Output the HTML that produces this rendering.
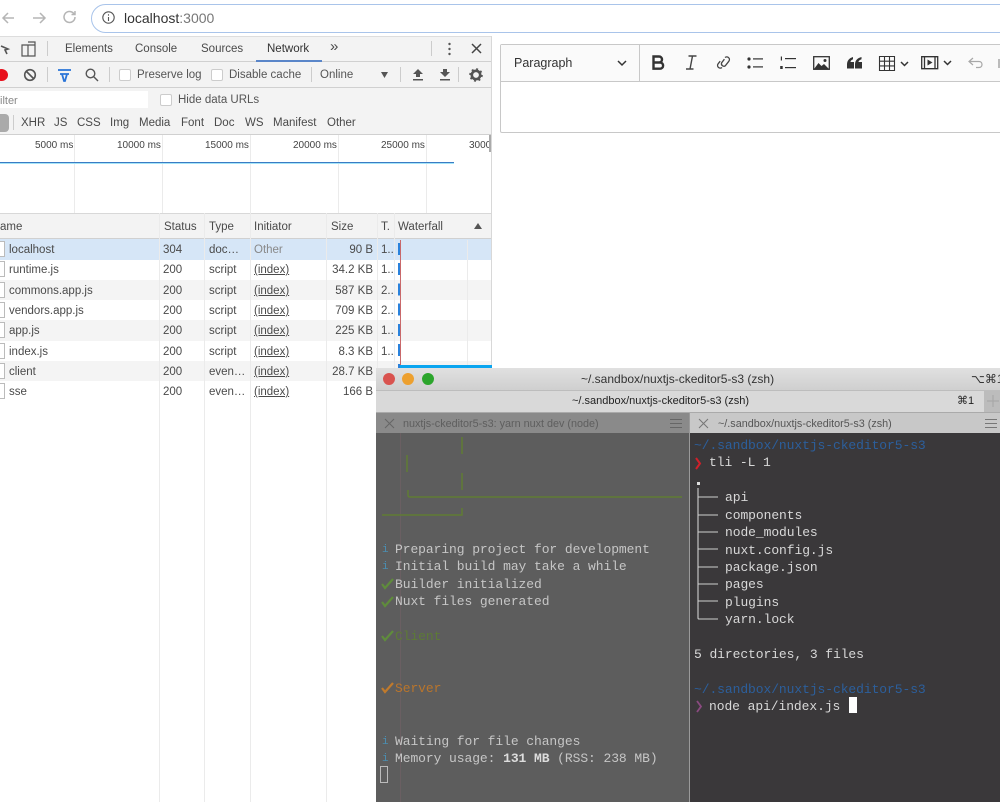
<!DOCTYPE html>
<html><head><meta charset="utf-8"><style>
html,body{margin:0;padding:0;background:#fff}
body{width:1000px;height:802px;position:relative;overflow:hidden;font-family:"Liberation Sans",sans-serif;color:#444}
#w{position:absolute;left:0;top:0;width:1000px;height:802px;overflow:hidden;filter:blur(.3px)}
.a{position:absolute}
.t{position:absolute;white-space:nowrap;line-height:14px;font-size:11.5px;color:#4a4a4a}
.m{position:absolute;white-space:nowrap;font-family:"Liberation Mono",monospace;font-size:13px;letter-spacing:-.08px;line-height:18px;color:#c6c6c6}
.r{color:#d8d8d8}
.cb{position:absolute;width:10px;height:10px;background:#fff;border:1px solid #ccc;border-radius:2px}
.v{position:absolute;width:1px;background:#ebebeb}
.u{text-decoration:underline}
.tt{position:absolute;white-space:nowrap;font-size:10px;line-height:13px;color:#444}
svg{position:absolute;overflow:visible}
</style></head><body><div id="w">

<!-- browser bar -->
<div class="a" style="left:91px;top:4px;width:1000px;height:27px;border:1.5px solid #a9c4ea;border-radius:15px;background:#fff"></div>
<svg style="left:0;top:8px" width="80" height="20" fill="none" stroke="#b5b5b5" stroke-width="1.5"><path d="M14 10H3M8 5l-5 5 5 5"/><path d="M33 10h12M40 5l5 5-5 5"/></svg>
<svg style="left:62px;top:9px" width="16" height="16" fill="none" stroke="#b5b5b5" stroke-width="1.5"><path d="M13 8a5.5 5.5 0 1 1-1.6-3.9L13 5.5M13 2v3.5H9.5"/></svg>
<svg style="left:102px;top:11px" width="14" height="14" fill="none" stroke="#555" stroke-width="1.1"><circle cx="6.500" cy="6.500" r="5.700"/><path d="M6.500 6v4M6.500 3.300v1.300"/></svg>
<div class="t" style="left:124px;top:10px;font-size:14px;line-height:16px;color:#333">localhost<span style="color:#777">:3000</span></div>

<!-- devtools -->
<div class="a" style="left:0;top:36px;width:491px;height:1px;background:#ddd"></div>
<div class="a" style="left:0;top:37px;width:491px;height:98px;background:#f3f3f3"></div>
<div class="a" style="left:491px;top:36px;width:1px;height:330px;background:#d8d8d8"></div>
<div class="a" style="left:0;top:61px;width:491px;height:1px;background:#d0d0d0"></div>
<div class="a" style="left:0;top:87px;width:491px;height:1px;background:#d0d0d0"></div>
<div class="a" style="left:0;top:134px;width:491px;height:1px;background:#d0d0d0"></div>

<svg style="left:0;top:41px" width="36" height="16" fill="none" stroke="#555" stroke-width="1.2"><path d="M0 4v0M1 5l7 3-3 1 2 4" stroke-width="1.600"/><path d="M22 5h13v11H22zM28 2h7v14M28 5v11" transform="translate(0 -1)"/></svg>
<div class="a" style="left:47px;top:41px;width:1px;height:15px;background:#ccc"></div>
<div class="t" style="left:65px;top:42px">Elements</div>
<div class="t" style="left:135px;top:42px">Console</div>
<div class="t" style="left:201px;top:42px">Sources</div>
<div class="t" style="left:267px;top:42px;color:#333">Network</div>
<div class="a" style="left:256px;top:60px;width:66px;height:2px;background:#5a86c9"></div>
<div class="t" style="left:330px;top:40px;font-size:15px">»</div>
<div class="a" style="left:431px;top:41px;width:1px;height:15px;background:#ccc"></div>
<svg style="left:447px;top:42px" width="6" height="14" fill="#555"><circle cx="2.500" cy="2" r="1.200"/><circle cx="2.500" cy="7" r="1.200"/><circle cx="2.500" cy="12" r="1.200"/></svg>
<svg style="left:471px;top:43px" width="12" height="12" stroke="#444" stroke-width="1.500"><path d="M1 1l9 9M10 1l-9 9"/></svg>

<div class="a" style="left:-5px;top:69px;width:13px;height:12px;border-radius:50%;background:#e8101c"></div>
<svg style="left:23px;top:68px" width="14" height="14" fill="none" stroke="#555" stroke-width="1.600"><circle cx="7" cy="7" r="5.300"/><path d="M3 3l8 8"/></svg>
<div class="a" style="left:47px;top:67px;width:1px;height:15px;background:#ccc"></div>
<svg style="left:57px;top:69px" width="16" height="14" fill="none" stroke="#2a74d8" stroke-width="1.800"><path d="M1 1h13M3 5h9M5 5l2 7h1l2-7"/></svg>
<svg style="left:85px;top:68px" width="14" height="14" fill="none" stroke="#555" stroke-width="1.400"><circle cx="5.500" cy="5.500" r="4.300"/><path d="M8.500 8.500l4.500 4.500"/></svg>
<div class="a" style="left:109px;top:67px;width:1px;height:15px;background:#ccc"></div>
<div class="cb" style="left:119px;top:69px"></div>
<div class="t" style="left:137px;top:68px;color:#555">Preserve log</div>
<div class="cb" style="left:211px;top:69px"></div>
<div class="t" style="left:229px;top:68px;color:#555">Disable cache</div>
<div class="a" style="left:311px;top:67px;width:1px;height:15px;background:#ccc"></div>
<div class="t" style="left:320px;top:68px;color:#555">Online</div>
<svg style="left:380px;top:71px" width="9" height="8" fill="#555"><path d="M1 1h7L4.500 7z"/></svg>
<div class="a" style="left:400px;top:67px;width:1px;height:15px;background:#ccc"></div>
<svg style="left:412px;top:69px" width="12" height="13" fill="#555"><path d="M6 0l5 5H8v3H4V5H1zM1 10h10v1.500H1z"/></svg>
<svg style="left:439px;top:69px" width="12" height="13" fill="#555"><path d="M4 0h4v3h3L6 8 1 3h3zM1 10h10v1.500H1z"/></svg>
<div class="a" style="left:458px;top:67px;width:1px;height:15px;background:#ccc"></div>
<svg style="left:469px;top:68px" width="14" height="14"><circle cx="7" cy="7" r="4.200" fill="none" stroke="#555" stroke-width="2.600"/><circle cx="7" cy="7" r="6" fill="none" stroke="#555" stroke-width="1.600" stroke-dasharray="2 2.700"/></svg>

<div class="a" style="left:0;top:91px;width:148px;height:17px;background:#fff"></div>
<div class="t" style="left:0;top:94px;font-size:11px;color:#888">ilter</div>
<div class="cb" style="left:160px;top:94px"></div>
<div class="t" style="left:178px;top:93px;color:#555">Hide data URLs</div>

<div class="a" style="left:-8px;top:114px;width:17px;height:18px;border-radius:4px;background:#aaa"></div>
<div class="a" style="left:13px;top:115px;width:1px;height:15px;background:#ccc"></div>
<div class="t" style="left:21px;top:116px">XHR</div>
<div class="t" style="left:54px;top:116px">JS</div>
<div class="t" style="left:77px;top:116px">CSS</div>
<div class="t" style="left:110px;top:116px">Img</div>
<div class="t" style="left:139px;top:116px">Media</div>
<div class="t" style="left:181px;top:116px">Font</div>
<div class="t" style="left:214px;top:116px">Doc</div>
<div class="t" style="left:245px;top:116px">WS</div>
<div class="t" style="left:273px;top:116px">Manifest</div>
<div class="t" style="left:327px;top:116px">Other</div>

<!-- overview -->
<div class="v" style="left:74px;top:135px;height:78px"></div>
<div class="v" style="left:162px;top:135px;height:78px"></div>
<div class="v" style="left:250px;top:135px;height:78px"></div>
<div class="v" style="left:338px;top:135px;height:78px"></div>
<div class="v" style="left:426px;top:135px;height:78px"></div>
<div class="tt" style="left:35px;top:139px">5000 ms</div>
<div class="tt" style="left:117px;top:139px">10000 ms</div>
<div class="tt" style="left:205px;top:139px">15000 ms</div>
<div class="tt" style="left:293px;top:139px">20000 ms</div>
<div class="tt" style="left:381px;top:139px">25000 ms</div>
<div class="tt" style="left:469px;top:139px;width:20px;overflow:hidden">30000</div>
<div class="a" style="left:489px;top:135px;width:2px;height:17px;background:#aaa"></div>
<div class="a" style="left:0;top:162px;width:454px;height:1px;background:#3a7cc4"></div>
<div class="a" style="left:0;top:163px;width:454px;height:1px;background:#a5e4f8"></div>

<!-- table head -->
<div class="a" style="left:0;top:213px;width:491px;height:26px;background:#f3f3f3;border-top:1px solid #d8d8d8;border-bottom:1px solid #d0d0d0;box-sizing:border-box"></div>
<div class="t" style="left:0;top:220px">ame</div>
<div class="t" style="left:164px;top:220px">Status</div>
<div class="t" style="left:209px;top:220px">Type</div>
<div class="t" style="left:254px;top:220px">Initiator</div>
<div class="t" style="left:331px;top:220px">Size</div>
<div class="t" style="left:381px;top:220px">T.</div>
<div class="t" style="left:398px;top:220px">Waterfall</div>
<svg style="left:473px;top:222px" width="10" height="8" fill="#555"><path d="M5 1l4 6H1z"/></svg>

<!-- rows bg -->
<div class="a" style="left:0;top:239px;width:491px;height:21px;background:#d6e6f7"></div>
<div class="a" style="left:0;top:280px;width:491px;height:20px;background:#f4f4f4"></div>
<div class="a" style="left:0;top:320px;width:491px;height:21px;background:#f4f4f4"></div>
<div class="a" style="left:0;top:361px;width:491px;height:20px;background:#f4f4f4"></div>

<!-- column lines -->
<div class="v" style="left:159px;top:213px;height:589px"></div>
<div class="v" style="left:204px;top:213px;height:589px"></div>
<div class="v" style="left:250px;top:213px;height:589px"></div>
<div class="v" style="left:326px;top:213px;height:589px"></div>
<div class="v" style="left:377px;top:213px;height:589px"></div>
<div class="v" style="left:394px;top:213px;height:589px"></div>
<div class="v" style="left:467px;top:240px;height:128px"></div>

<!-- file icons -->
<div class="a" style="left:-4px;top:241px;width:7px;height:14px;background:#fff;border:1px solid #bbb"></div>
<div class="a" style="left:-4px;top:261px;width:7px;height:14px;background:#fff;border:1px solid #bbb"></div>
<div class="a" style="left:-4px;top:282px;width:7px;height:14px;background:#fff;border:1px solid #bbb"></div>
<div class="a" style="left:-4px;top:302px;width:7px;height:14px;background:#fff;border:1px solid #bbb"></div>
<div class="a" style="left:-4px;top:322px;width:7px;height:14px;background:#fff;border:1px solid #bbb"></div>
<div class="a" style="left:-4px;top:343px;width:7px;height:14px;background:#fff;border:1px solid #bbb"></div>
<div class="a" style="left:-4px;top:363px;width:7px;height:14px;background:#fff;border:1px solid #bbb"></div>
<div class="a" style="left:-4px;top:383px;width:7px;height:14px;background:#fff;border:1px solid #bbb"></div>

<!-- rows -->
<div class="t" style="left:9px;top:243px">localhost</div><div class="t" style="left:163px;top:243px">304</div><div class="t" style="left:209px;top:243px">doc…</div><div class="t" style="left:254px;top:243px;color:#888">Other</div><div class="t" style="left:300px;width:73px;text-align:right;top:243px">90 B</div><div class="t" style="left:381px;top:243px">1..</div>
<div class="t" style="left:9px;top:263px">runtime.js</div><div class="t" style="left:163px;top:263px">200</div><div class="t" style="left:209px;top:263px">script</div><div class="t u" style="left:254px;top:263px">(index)</div><div class="t" style="left:300px;width:73px;text-align:right;top:263px">34.2 KB</div><div class="t" style="left:381px;top:263px">1..</div>
<div class="t" style="left:9px;top:284px">commons.app.js</div><div class="t" style="left:163px;top:284px">200</div><div class="t" style="left:209px;top:284px">script</div><div class="t u" style="left:254px;top:284px">(index)</div><div class="t" style="left:300px;width:73px;text-align:right;top:284px">587 KB</div><div class="t" style="left:381px;top:284px">2..</div>
<div class="t" style="left:9px;top:304px">vendors.app.js</div><div class="t" style="left:163px;top:304px">200</div><div class="t" style="left:209px;top:304px">script</div><div class="t u" style="left:254px;top:304px">(index)</div><div class="t" style="left:300px;width:73px;text-align:right;top:304px">709 KB</div><div class="t" style="left:381px;top:304px">2..</div>
<div class="t" style="left:9px;top:324px">app.js</div><div class="t" style="left:163px;top:324px">200</div><div class="t" style="left:209px;top:324px">script</div><div class="t u" style="left:254px;top:324px">(index)</div><div class="t" style="left:300px;width:73px;text-align:right;top:324px">225 KB</div><div class="t" style="left:381px;top:324px">1..</div>
<div class="t" style="left:9px;top:345px">index.js</div><div class="t" style="left:163px;top:345px">200</div><div class="t" style="left:209px;top:345px">script</div><div class="t u" style="left:254px;top:345px">(index)</div><div class="t" style="left:300px;width:73px;text-align:right;top:345px">8.3 KB</div><div class="t" style="left:381px;top:345px">1..</div>
<div class="t" style="left:9px;top:365px">client</div><div class="t" style="left:163px;top:365px">200</div><div class="t" style="left:209px;top:365px">even…</div><div class="t u" style="left:254px;top:365px">(index)</div><div class="t" style="left:300px;width:73px;text-align:right;top:365px">28.7 KB</div>
<div class="t" style="left:9px;top:385px">sse</div><div class="t" style="left:163px;top:385px">200</div><div class="t" style="left:209px;top:385px">even…</div><div class="t u" style="left:254px;top:385px">(index)</div><div class="t" style="left:300px;width:73px;text-align:right;top:385px">166 B</div>

<!-- waterfall -->
<div class="a" style="left:398px;top:243px;width:2px;height:125px;background:repeating-linear-gradient(#2a82dc 0 12px,transparent 12px 20.200px)"></div>
<div class="a" style="left:400px;top:240px;width:1px;height:128px;background:#c9686a"></div>
<div class="a" style="left:400px;top:365px;width:92px;height:3px;background:#0aa5f0"></div>

<!-- editor -->
<div class="a" style="left:500px;top:44px;width:520px;height:89px;border:1px solid #c8c8c8;border-radius:2px;box-sizing:border-box;background:#fff"></div>
<div class="a" style="left:501px;top:45px;width:520px;height:36px;background:#fafafa;border-bottom:1px solid #c8c8c8"></div>
<div class="a" style="left:639px;top:45px;width:1px;height:36px;background:#c8c8c8"></div>
<div class="t" style="left:514px;top:56px;font-size:12.500px;color:#333">Paragraph</div>
<svg style="left:617px;top:60px" width="10" height="7" fill="none" stroke="#333" stroke-width="1.500"><path d="M1 1l4 4 4-4"/></svg>
<svg style="left:651px;top:55px" width="14" height="16" fill="none" stroke="#333" stroke-width="2.400"><path d="M2.500 1.500h5.500a3 3 0 0 1 0 6h-5.500zM2.500 7.500h6.500a3.100 3.100 0 0 1 0 6.200h-6.500z"/></svg>
<svg style="left:685px;top:55px" width="12" height="15" fill="none" stroke="#444" stroke-width="1.400"><path d="M3.500 1h8M1 14h7.500M7.500 1L5 14"/></svg>
<svg style="left:716px;top:55px" width="15" height="15" fill="none" stroke="#444" stroke-width="1.300"><path d="M9 2.500a2.700 2.700 0 0 1 3.800 3.800l-3.500 4.500a2.500 2.500 0 0 1-3.700-3l2.800-3.600"/><path d="M6 12.500a2.700 2.700 0 0 1-3.800-3.800l2-2.500"/></svg>
<svg style="left:747px;top:57px" width="17" height="13" fill="#333"><circle cx="2" cy="2" r="1.600"/><circle cx="2" cy="10" r="1.600"/><rect x="6" y="1.300" width="10" height="1.200"/><rect x="6" y="9.300" width="10" height="1.200"/></svg>
<svg style="left:779px;top:56px" width="18" height="14" fill="#333"><rect x="1.800" y="0.500" width="1.200" height="4"/><rect x="1.200" y="10" width="2.500" height="3"/><rect x="6" y="2" width="11" height="1.200"/><rect x="6" y="11" width="11" height="1.200"/></svg>
<svg style="left:813px;top:56px" width="17" height="14"><rect x="0.700" y="0.700" width="15.600" height="12.600" fill="none" stroke="#333" stroke-width="1.300"/><path d="M1 13l4.500-6 3 3 2.500-2 5 5z" fill="#333"/><circle cx="12" cy="4.500" r="1.500" fill="#333"/></svg>
<svg style="left:847px;top:57px" width="15" height="12" fill="#333"><path d="M0 7.500C0 3.500 2.500 1 6 0v2.300C4.300 3 3.500 4 3.500 5H7v6.500H0zM8 7.500C8 3.500 10.500 1 14.500 0v2.300C12.500 3 11.500 4 11.500 5H15v6.500H8z"/></svg>
<svg style="left:879px;top:56px" width="31" height="16" fill="none" stroke="#333" stroke-width="1.100"><path d="M.5.500h15v14H.5zM.5 5.200h15M.5 9.900h15M5.500.500v14M10.500.500v14"/><path d="M22 6l3.500 3.500L29 6" stroke-width="1.500"/></svg>
<svg style="left:921px;top:56px" width="32" height="14" fill="none" stroke="#333" stroke-width="1.300"><path d="M.7.700h16v12H.7zM3.500.700v12M14 .700v12"/><path d="M6.500 3.500v6l5-3z" fill="#333" stroke="none"/><path d="M23 5l3.500 3.500L30 5" stroke-width="1.500"/></svg>
<svg style="left:968px;top:57px" width="16" height="12" fill="none" stroke="#a8a8a8" stroke-width="1.200"><path d="M5 1L1 4.500 5 8M1 4.500h10c4 0 4 6 0 6H8"/></svg>
<div class="a" style="left:998px;top:59px;width:2px;height:9px;background:#bbb"></div>

<!-- terminal window -->
<div class="a" style="left:376px;top:368px;width:624px;height:434px;background:#5d5d5d"></div>
<div class="a" style="left:376px;top:368px;width:624px;height:22px;background:linear-gradient(#e0e0e0,#cfcfcf)"></div>
<div class="a" style="left:376px;top:390px;width:624px;height:1px;background:#bdbdbd"></div>
<div class="a" style="left:376px;top:391px;width:608px;height:21px;background:#d9d9d9"></div>
<div class="a" style="left:984px;top:391px;width:16px;height:21px;background:#bcbcbc"></div>
<div class="a" style="left:376px;top:412px;width:624px;height:1px;background:#aaa"></div>
<div class="a" style="left:376px;top:413px;width:314px;height:20px;background:#8a8a8a"></div>
<div class="a" style="left:690px;top:413px;width:310px;height:20px;background:#c8c8c8"></div>
<div class="a" style="left:689px;top:413px;width:1px;height:389px;background:#9a9a9a"></div>
<div class="a" style="left:690px;top:433px;width:310px;height:369px;background:#3a383a"></div>

<div class="a" style="left:383px;top:373px;width:12px;height:12px;border-radius:50%;background:#d9534f"></div>
<div class="a" style="left:402px;top:373px;width:12px;height:12px;border-radius:50%;background:#eda02f"></div>
<div class="a" style="left:422px;top:373px;width:12px;height:12px;border-radius:50%;background:#2ca52c"></div>
<div class="t" style="left:581px;top:372px;font-size:12px;color:#333">~/.sandbox/nuxtjs-ckeditor5-s3 (zsh)</div>
<div class="t" style="left:971px;top:372px;font-size:12px;color:#333">⌥⌘1</div>
<div class="t" style="left:572px;top:394px;font-size:11px;color:#222">~/.sandbox/nuxtjs-ckeditor5-s3 (zsh)</div>
<div class="t" style="left:957px;top:394px;font-size:11px;color:#222">⌘1</div>
<svg style="left:987px;top:395px" width="12" height="12" stroke="#a5a5a5"><path d="M6 0v12M0 6h12"/></svg>

<svg style="left:384px;top:418px" width="11" height="11" stroke="#666"><path d="M1 1l9 9M10 1l-9 9"/></svg>
<div class="t" style="left:403px;top:417px;font-size:10.800px;color:#5e5e5e">nuxtjs-ckeditor5-s3: yarn nuxt dev (node)</div>
<svg style="left:670px;top:419px" width="12" height="9" stroke="#666"><path d="M0 .5h12M0 4.500h12M0 8.500h12"/></svg>
<svg style="left:698px;top:418px" width="11" height="11" stroke="#777"><path d="M1 1l9 9M10 1l-9 9"/></svg>
<div class="t" style="left:718px;top:417px;font-size:10.800px;color:#555">~/.sandbox/nuxtjs-ckeditor5-s3 (zsh)</div>
<svg style="left:985px;top:419px" width="12" height="9" stroke="#777"><path d="M0 .5h12M0 4.500h12M0 8.500h12"/></svg>

<!-- left pane -->
<div class="a" style="left:400px;top:433px;width:1px;height:369px;background:#6a5f62"></div>
<svg style="left:376px;top:433px" width="314" height="90" fill="none" stroke="#607c34" stroke-width="1.500"><path d="M86 4v17M31 22v17M86 40v17M32 57v5q0 2 2 2H306"/><path d="M6 82H86v-7"/></svg>
<div class="m" style="left:395px;top:541px">Preparing project for development</div>
<div class="m" style="left:395px;top:558px">Initial build may take a while</div>
<div class="m" style="left:395px;top:576px">Builder initialized</div>
<div class="m" style="left:395px;top:593px">Nuxt files generated</div>
<div class="m" style="left:395px;top:628px;color:#5d7a36">Client</div>
<div class="m" style="left:395px;top:680px;color:#b9752c">Server</div>
<div class="m" style="left:395px;top:733px">Waiting for file changes</div>
<div class="m" style="left:395px;top:750px">Memory usage: <b style="color:#ddd">131 MB</b> (RSS: 238 MB)</div>
<div class="m" style="left:382px;top:541px;color:#4b8db0;font-size:11px">i</div>
<div class="m" style="left:382px;top:558px;color:#4b8db0;font-size:11px">i</div>
<div class="m" style="left:382px;top:733px;color:#4b8db0;font-size:11px">i</div>
<div class="m" style="left:382px;top:750px;color:#4b8db0;font-size:11px">i</div>
<svg style="left:381px;top:578px" width="14" height="12" fill="none" stroke="#5f8c3c" stroke-width="2.200"><path d="M1 6l3 4 8-9"/></svg>
<svg style="left:381px;top:596px" width="14" height="12" fill="none" stroke="#5f8c3c" stroke-width="2.200"><path d="M1 6l3 4 8-9"/></svg>
<svg style="left:381px;top:630px" width="14" height="12" fill="none" stroke="#5f8c3c" stroke-width="2.200"><path d="M1 6l3 4 8-9"/></svg>
<svg style="left:381px;top:682px" width="14" height="12" fill="none" stroke="#c07a2c" stroke-width="2.200"><path d="M1 6l3 4 8-9"/></svg>
<div class="a" style="left:380px;top:766px;width:6px;height:15px;border:1px solid #bbb"></div>

<!-- right pane -->
<div class="m" style="left:694px;top:437px;color:#2c5f9c">~/.sandbox/nuxtjs-ckeditor5-s3</div>
<svg style="left:694px;top:457px" width="9" height="13" fill="none" stroke="#d0202a" stroke-width="2"><path d="M2 1l4 5.500L2 12"/></svg>
<div class="m r" style="left:709px;top:454px">tli -L 1</div>
<div class="a" style="left:697px;top:482px;width:3px;height:3px;background:#ddd"></div>
<svg style="left:697px;top:488px" width="22" height="134" fill="none" stroke="#cfcfcf" stroke-width="1.100"><path d="M1 0V130q0 1 1 1H21M1 9H21M1 27H21M1 44H21M1 61H21M1 79H21M1 96H21M1 113H21"/></svg>
<div class="m r" style="left:725px;top:489px">api</div>
<div class="m r" style="left:725px;top:507px">components</div>
<div class="m r" style="left:725px;top:524px">node_modules</div>
<div class="m r" style="left:725px;top:542px">nuxt.config.js</div>
<div class="m r" style="left:725px;top:559px">package.json</div>
<div class="m r" style="left:725px;top:576px">pages</div>
<div class="m r" style="left:725px;top:594px">plugins</div>
<div class="m r" style="left:725px;top:611px">yarn.lock</div>
<div class="m r" style="left:694px;top:646px">5 directories, 3 files</div>
<div class="m" style="left:694px;top:681px;color:#2c5f9c">~/.sandbox/nuxtjs-ckeditor5-s3</div>
<svg style="left:695px;top:700px" width="9" height="13" fill="none" stroke="#8b4a80" stroke-width="1.800"><path d="M2 1l4 5.500L2 12"/></svg>
<div class="m r" style="left:709px;top:698px">node api/index.js</div>
<div class="a" style="left:849px;top:697px;width:8px;height:16px;background:#fff"></div>
</div></body></html>
